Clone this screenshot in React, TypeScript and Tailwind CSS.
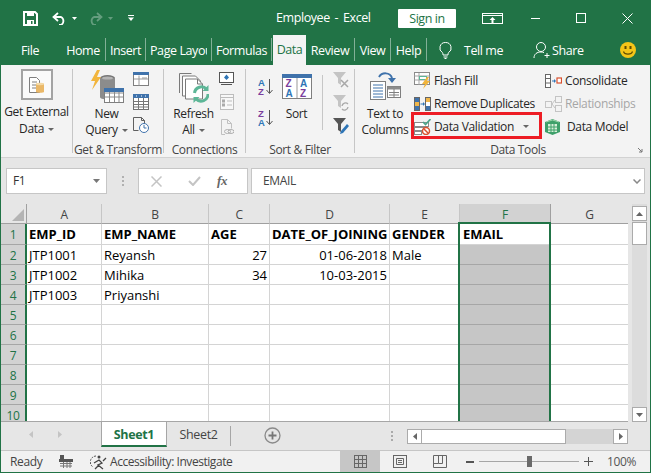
import type { ReactNode } from "react"

const ui = "font-['Open_Sans','Noto_Sans',sans-serif] tracking-[-0.35px]"
const topUi = "font-['Open_Sans','Noto_Sans',sans-serif] text-[12.5px] tracking-[-0.42px]"
const cellFont = "font-['Open_Sans','Noto_Sans',sans-serif]"

function Ico({ w, h, children, className = "" }: { w: number; h: number; children: ReactNode; className?: string }) {
  return (
    <svg width={w} height={h} viewBox={`0 0 ${w} ${h}`} fill="none" className={`block shrink-0 ${className}`}>
      {children}
    </svg>
  )
}

function Caret({ color = "#666" }: { color?: string }) {
  return (
    <svg width="6" height="3" viewBox="0 0 6 3" className="inline-block ml-[4px] align-middle">
      <path d="M0 0h6L3 3z" fill={color} />
    </svg>
  )
}

const NewQueryIcon = () => (
  <Ico w={34} h={33}>
    <ellipse cx="17.5" cy="8" rx="7.5" ry="3" fill="#777" />
    <path d="M10 8v19c0 1.5 3 2.500 7 2.500h8V8z" fill="#8c8c8c" />
    <ellipse cx="17.500" cy="8" rx="5.500" ry="1.600" fill="#b5b5b5" />
    <path d="M7 0 1 11h4L2 20 11 7H7l3-7z" fill="#f2b53c" />
    <rect x="14.500" y="18.500" width="19" height="14" fill="#fff" stroke="#7f7f7f" />
    <rect x="14" y="18" width="20" height="4" fill="#3f72ab" />
    <path d="M14.500 27h19M14.500 23h19M19.500 22v10M24.500 22v10M29 22v10" stroke="#8a8a8a" />
  </Ico>
)

const ShowQueries = () => (
  <Ico w={16} h={14}>
    <rect x=".5" y=".5" width="15" height="13" fill="#fff" stroke="#7f7f7f" />
    <rect width="16" height="3" fill="#3f72ab" />
    <path d="M6 3.500v10M1 7h14M9 6h5" stroke="#9a9a9a" />
  </Ico>
)

const FromTable = () => (
  <Ico w={16} h={16}>
    <rect x=".5" y=".5" width="15" height="15" fill="#fff" stroke="#6f6f6f" />
    <rect width="16" height="4" fill="#3f72ab" />
    <path d="M1 7.500h14M1 10.500h14M1 13h14M5.500 4v12M10.500 4v12" stroke="#777" />
    <path d="M3 2h1M8 2h1M12 2h1" stroke="#fff" />
  </Ico>
)

const RecentSources = () => (
  <Ico w={16} h={16}>
    <path d="M.5.500h8l3 3V8M.5.500v13h5" stroke="#5f5f5f" />
    <path d="M8.500.500v3h3" stroke="#5f5f5f" />
    <circle cx="11" cy="11" r="4.500" fill="#fff" stroke="#3f72ab" />
    <path d="M11 8v3h2.500" stroke="#3f72ab" />
  </Ico>
)

const RefreshIcon = () => (
  <Ico w={31} h={31}>
    <path d="M1.500 21V1.500h12" stroke="#7a7a7a" />
    <path d="M4.500 24V4h13l5 5v15z" fill="#fff" stroke="#7a7a7a" />
    <path d="M7.500 27V7h12l5 5v15z" fill="#fff" stroke="#7a7a7a" />
    <path d="M19.500 7v5h5" stroke="#7a7a7a" />
    <path d="M16.500 21a7 7 0 0 1 12-4" stroke="#5db697" strokeWidth="3" />
    <path d="M30 22a7 7 0 0 1-12 5" stroke="#5db697" strokeWidth="3" />
    <path d="M30.500 13v6h-6zM15.500 31v-6h6z" fill="#5db697" />
  </Ico>
)

const ConnectionIcon = () => (
  <Ico w={15} h={13}>
    <rect x=".5" y=".5" width="14" height="10" fill="#fff" stroke="#555" />
    <path d="M2 12.500h11" stroke="#555" />
    <path d="M7.500 2.500 10 5.500 7.500 8 5 5.500z" fill="#2e75b6" />
  </Ico>
)

const PropertiesIcon = () => (
  <Ico w={14} h={16}>
    <rect x=".5" y=".5" width="13" height="15" fill="#f8f8f8" stroke="#bdbdbd" />
    <path d="M.5 3.500h13M7 7h5M7 11h5" stroke="#bdbdbd" />
    <rect x="2.500" y="6" width="2" height="2" stroke="#aaa" />
    <rect x="2.500" y="10" width="2" height="2" stroke="#aaa" />
  </Ico>
)

const EditLinksIcon = () => (
  <Ico w={13} h={16}>
    <path d="M.5 15.500V.500h6l4 4v5M.5 15.500H4M6.500.500v4h4" stroke="#c0c0c0" />
    <ellipse cx="6.500" cy="12.500" rx="3" ry="2" stroke="#b0b0b0" />
    <ellipse cx="10" cy="12.500" rx="3" ry="2" stroke="#b0b0b0" />
  </Ico>
)

function AzIcon({ top, bottom, topColor, bottomColor }: { top: string; bottom: string; topColor: string; bottomColor: string }) {
  return (
    <Ico w={15} h={17}>
      <text x="0" y="8" fontSize="9.500" fontWeight="700" fontFamily="Liberation Sans, sans-serif" fill={topColor}>{top}</text>
      <text x="0" y="16.500" fontSize="9.500" fontWeight="700" fontFamily="Liberation Sans, sans-serif" fill={bottomColor}>{bottom}</text>
      <path d="M11.500 1v14M8.500 12l3 3.500 3-3.500" stroke="#555" />
    </Ico>
  )
}

const SortBox = () => (
  <Ico w={30} h={25}>
    <rect x=".5" y=".5" width="29" height="24" fill="#fff" stroke="#7f7f7f" />
    <rect width="30" height="4" fill="#3f72ab" />
    <path d="M15 4v20" stroke="#999" />
    <text x="3.500" y="13" fontSize="10" fontWeight="700" fontFamily="Liberation Sans, sans-serif" fill="#7a3e9d">Z</text>
    <text x="3.500" y="23" fontSize="10" fontWeight="700" fontFamily="Liberation Sans, sans-serif" fill="#2e75b6">A</text>
    <text x="18" y="13" fontSize="10" fontWeight="700" fontFamily="Liberation Sans, sans-serif" fill="#2e75b6">A</text>
    <text x="18" y="23" fontSize="10" fontWeight="700" fontFamily="Liberation Sans, sans-serif" fill="#7a3e9d">Z</text>
  </Ico>
)

const ClearFilter = () => (
  <Ico w={17} h={16}>
    <path d="M0 0h13L8 6v7L5 11V6z" fill="#c4c4c4" />
    <path d="m8 8 7 7M15 8l-7 7" stroke="#a8a8a8" strokeWidth="1.500" />
  </Ico>
)

const ReapplyFilter = () => (
  <Ico w={17} h={16}>
    <path d="M0 0h13L8 6v7L5 11V6z" fill="#c4c4c4" />
    <path d="M9 11a3.500 3.500 0 0 1 6-2M15 12a3.500 3.500 0 0 1-6 2" stroke="#a8a8a8" strokeWidth="1.300" />
  </Ico>
)

const AdvancedFilter = () => (
  <Ico w={17} h={17}>
    <path d="M0 0h13L8 6v8L5 12V6z" fill="#555" />
    <path d="m7 16 1-3 6-7 2 2-6 7z" fill="#2e75b6" />
  </Ico>
)

const TextToColumnsIcon = () => (
  <Ico w={31} h={28}>
    <path d="M9 5C12 0 20 0 22 6" stroke="#3f72ab" strokeWidth="2" />
    <path d="M18 6h8l-4 5z" fill="#3f72ab" />
    <rect x=".5" y="9.500" width="15" height="18" fill="#fff" stroke="#7f7f7f" />
    <path d="M3 13h10M3 16h10M3 19h10M3 22h10M3 25h10" stroke="#3f72ab" />
    <rect x="17.500" y="14.500" width="13" height="11" fill="#fff" stroke="#7f7f7f" />
    <rect x="17.500" y="14.500" width="13" height="3" fill="#8c8c8c" />
    <path d="M24 17v9M19 20.500h10M19 23h10" stroke="#7f7f7f" />
  </Ico>
)

const FlashFillIcon = () => (
  <Ico w={17} h={17}>
    <rect x=".5" y=".5" width="15" height="12" fill="#fff" stroke="#8a8a8a" />
    <path d="M.5 4h15M.5 8h15M5 1v12" stroke="#a5a5a5" />
    <rect x="5.500" y="4.500" width="7" height="3" fill="#fff" stroke="#5db697" />
    <path d="M13 5 8 12h3l-2 5 7-8h-3l2-4z" fill="#f2b53c" />
  </Ico>
)

const RemoveDupIcon = () => (
  <Ico w={17} h={14}>
    <rect x=".5" y=".5" width="5" height="13" fill="#fff" stroke="#666" />
    <rect x="1" y="1" width="4" height="4" fill="#3f72ab" />
    <rect x="1" y="5" width="4" height="4" fill="#f0b64a" />
    <rect x="1" y="9" width="4" height="4" fill="#3f72ab" />
    <rect x="11.500" y=".5" width="5" height="13" fill="#fff" stroke="#666" />
    <rect x="12" y="1" width="4" height="4" fill="#f0b64a" />
    <rect x="12" y="9" width="4" height="4" fill="#3f72ab" />
    <path d="M6.500 7h3" stroke="#2e75b6" />
    <path d="m9 5 2 2-2 2z" fill="#2e75b6" />
  </Ico>
)

const DataValidationIcon = () => (
  <Ico w={17} h={16}>
    <rect x=".5" y="3.500" width="14" height="4" fill="#fff" stroke="#8a8a8a" />
    <rect x=".5" y="8.500" width="9" height="3" fill="#fff" stroke="#8a8a8a" />
    <rect x=".5" y="12.500" width="7" height="3" fill="#fff" stroke="#8a8a8a" />
    <path d="m9 3 2.500 2.500L16.500 0" stroke="#4aa58a" strokeWidth="1.600" />
    <circle cx="12" cy="12" r="3.500" fill="#fff" stroke="#d9502e" strokeWidth="1.500" />
    <path d="m9.500 9.500 5 5" stroke="#d9502e" strokeWidth="1.500" />
  </Ico>
)

const ConsolidateIcon = () => (
  <Ico w={17} h={14}>
    <rect x=".5" y=".5" width="5" height="13" fill="#fff" stroke="#666" />
    <path d="M1 4.500h4M1 9h4" stroke="#666" />
    <path d="M7 7h3" stroke="#2e75b6" />
    <path d="m9 5 2 2-2 2z" fill="#2e75b6" />
    <rect x="12" y="4" width="4.500" height="5" fill="#fff" stroke="#d9502e" strokeWidth="1.200" />
  </Ico>
)

const RelationshipsIcon = () => (
  <Ico w={17} h={16}>
    <rect x=".5" y="5.500" width="6" height="6" fill="#f3f3f3" stroke="#c4c4c4" />
    <rect x="10.500" y=".5" width="6" height="6" fill="#f3f3f3" stroke="#c4c4c4" />
    <rect x="10.500" y="9.500" width="6" height="6" fill="#f3f3f3" stroke="#c4c4c4" />
    <path d="M7 8 10 4M7 8l3 4" stroke="#c4c4c4" />
  </Ico>
)

const DataModelIcon = () => (
  <Ico w={15} h={16}>
    <path d="M7.500 0 15 3v10l-7.500 3L0 13V3z" fill="#3ea06a" />
    <path d="M3 5h9v8H3z" fill="#d8efd9" />
    <path d="M6 5v8M9 5v8M3 8h9M3 11h9" stroke="#3ea06a" />
    <path d="M1 3 7.500 1 14 3" stroke="#9ed6ab" />
  </Ico>
)

function BigBtn({ w, icon, lines, caret, pt = 5 }: { w: number; icon: ReactNode; lines: string[]; caret?: boolean; pt?: number }) {
  return (
    <div className="flex flex-col items-center shrink-0" style={{ width: w }}>
      <div className="h-[41px] flex justify-center" style={{ paddingTop: pt }}>{icon}</div>
      {lines.map((l, i) => (
        <div key={l} className="h-[16px] leading-[16px] whitespace-nowrap text-[#262626]">
          {l}
          {caret && i === lines.length - 1 && <Caret />}
        </div>
      ))}
    </div>
  )
}

function Group({ w, label, children, labelClass = "text-center" }: { w: number; label: string; children: ReactNode; labelClass?: string }) {
  return (
    <div className="flex flex-col shrink-0 relative" style={{ width: w }}>
      <div className="h-[77px] flex">{children}</div>
      <div className={`h-[15px] leading-[15px] text-[#444] whitespace-nowrap ${labelClass}`}>{label}</div>
    </div>
  )
}

const GroupSep = () => <div className="w-px h-[84px] mt-[4px] bg-[#c6c6c6] shrink-0" />

function ToolRow({ icon, label, muted, gap = 3 }: { icon: ReactNode; label: string; muted?: boolean; gap?: number }) {
  return (
    <div className={`h-[23px] flex items-center whitespace-nowrap ${muted ? "text-[#a6a6a6]" : "text-[#262626]"}`} style={{ gap }}>
      {icon}
      <span>{label}</span>
    </div>
  )
}

function Ribbon() {
  return (
    <div className={`h-[93px] shrink-0 flex bg-[#f3f3f3] border-b border-[#d2d2d2] text-[12px] ${ui}`}>
      <Group w={71} label="">
        <div className="w-full flex flex-col items-center pt-[4px]">
          <div className="w-[32px] h-[31px] border-2 border-[#a3a3a3] bg-[#fafafa] flex items-center justify-center">
            <Ico w={15} h={16}>
              <path d="M.5.500h7l3 3V15.500H.5z" fill="#fff" stroke="#7f7f7f" />
              <path d="M3 5h5M3 8h4M3 11h4" stroke="#7f7f7f" />
              <path d="M7 7c0-1 8-1 8 0v8c0 1-8 1-8 0z" fill="#eab868" />
              <ellipse cx="11" cy="7" rx="4" ry="1.200" fill="#f4d9a5" />
            </Ico>
          </div>
          <div className="mt-[3px] h-[17px] leading-[17px] whitespace-nowrap text-[#262626]">Get External</div>
          <div className="h-[17px] leading-[17px] text-[#262626]">Data<Caret /></div>
        </div>
      </Group>
      <GroupSep />
      <Group w={90} label="Get & Transform">
        <div className="w-[12px] shrink-0" />
        <BigBtn w={43} icon={<NewQueryIcon />} lines={["New", "Query"]} caret />
        <div className="ml-[5px] flex flex-col pt-[7px] gap-[8px]">
          <ShowQueries />
          <FromTable />
          <div className="mt-[-1px]"><RecentSources /></div>
        </div>
      </Group>
      <GroupSep />
      <Group w={81} label="Connections">
        <div className="w-[8px] shrink-0" />
        <BigBtn w={43} icon={<RefreshIcon />} lines={["Refresh", "All"]} caret pt={7} />
        <div className="ml-[4px] flex flex-col pt-[7px] gap-[9px] items-end w-[15px]">
          <ConnectionIcon />
          <PropertiesIcon />
          <EditLinksIcon />
        </div>
      </Group>
      <GroupSep />
      <Group w={108} label="Sort & Filter">
        <div className="ml-[12px] pt-[13px] flex flex-col gap-[14px]">
          <AzIcon top="A" bottom="Z" topColor="#2e75b6" bottomColor="#7a3e9d" />
          <AzIcon top="Z" bottom="A" topColor="#7a3e9d" bottomColor="#2e75b6" />
        </div>
        <div className="ml-[5px]">
          <BigBtn w={37} icon={<SortBox />} lines={["Sort"]} pt={9} />
        </div>
        <div className="ml-[7px] mt-[10px] w-px h-[55px] bg-[#c6c6c6]" />
        <div className="ml-[10px] pt-[7px] flex flex-col gap-[7px]">
          <ClearFilter />
          <ReapplyFilter />
          <AdvancedFilter />
        </div>
      </Group>
      <GroupSep />
      <Group w={295} label="Data Tools" labelClass="text-center pl-[31px]">
        <div className="ml-[6px]">
          <BigBtn w={48} icon={<TextToColumnsIcon />} lines={["Text to", "Columns"]} pt={7} />
        </div>
        <div className="ml-[5px] w-[131px] pt-[4px] shrink-0">
          <ToolRow icon={<FlashFillIcon />} label="Flash Fill" />
          <ToolRow icon={<RemoveDupIcon />} label="Remove Duplicates" />
          <div className="relative">
            <ToolRow icon={<DataValidationIcon />} label="Data Validation" />
            <div className="absolute left-[-3px] top-[-3px] w-[131px] h-[27px] border-[3px] border-[#ed1c24]" />
            <svg width="6" height="3" viewBox="0 0 6 3" className="absolute left-[109px] top-[10px]"><path d="M0 0h6L3 3z" fill="#666" /></svg>
          </div>
        </div>
        <div className="pt-[4px] shrink-0">
          <ToolRow icon={<ConsolidateIcon />} label="Consolidate" />
          <ToolRow icon={<RelationshipsIcon />} label="Relationships" muted />
          <ToolRow icon={<DataModelIcon />} label="Data Model" gap={7} />
        </div>
      </Group>
      <svg width="5" height="5" viewBox="0 0 5 5" className="absolute left-[637px] top-[148px]">
        <path d="M0 0 4 4M4 1v3H1" stroke="#777" fill="none" />
      </svg>
    </div>
  )
}

const TabSep = () => <div className="w-px h-[23px] mb-[4px] bg-[#ffffff70] shrink-0" />

function Tab({ w, label, ml = 0 }: { w: number; label: string; ml?: number }) {
  return (
    <div className="text-center h-[29px] leading-[29px] whitespace-nowrap shrink-0" style={{ width: w, marginLeft: ml }}>
      {label}
    </div>
  )
}

function TitleBar() {
  return (
    <div className={`h-[36px] shrink-0 bg-[#217346] flex items-center text-white ${topUi}`}>
      <Ico w={15} h={15} className="ml-[22px]">
        <path d="M1 1h11l2 2v11H1z" stroke="#fff" strokeWidth="2" />
        <rect x="4" y="1" width="7" height="4" fill="#fff" />
        <rect x="4" y="9" width="7" height="5" fill="#fff" />
        <rect x="8" y="10" width="1.500" height="3" fill="#217346" />
      </Ico>
      <Ico w={15} h={13} className="ml-[14px]">
        <path d="M6 1 1.500 5 6 9" stroke="#fff" strokeWidth="1.800" />
        <path d="M2 5h7a4.500 4.500 0 0 1 0 8H7" stroke="#fff" strokeWidth="1.800" />
      </Ico>
      <svg width="5" height="3" viewBox="0 0 5 3" className="ml-[5px]"><path d="M0 0h5L2.500 3z" fill="#fff" /></svg>
      <Ico w={15} h={13} className="ml-[11px] opacity-30">
        <path d="M9 1l4.500 4L9 9" stroke="#fff" strokeWidth="1.800" />
        <path d="M13 5H6a4.500 4.500 0 0 0 0 8h2" stroke="#fff" strokeWidth="1.800" />
      </Ico>
      <svg width="5" height="3" viewBox="0 0 5 3" className="ml-[5px] opacity-30"><path d="M0 0h5L2.500 3z" fill="#fff" /></svg>
      <Ico w={6} h={6} className="ml-[15px]">
        <path d="M0 .5h6" stroke="#fff" />
        <path d="M0 2.500h6L3 6z" fill="#fff" />
      </Ico>
      <div className="ml-[142px] w-[96px] whitespace-nowrap [word-spacing:2px]">Employee - Excel</div>
      <div className="ml-[26px] w-[58px] h-[19px] bg-white text-[#217346] text-center leading-[19px] rounded-[1px]">Sign in</div>
      <Ico w={21} h={11} className="ml-[26px]">
        <rect x=".5" y=".5" width="20" height="10" stroke="#fff" />
        <path d="M1 2.500h19" stroke="#fff" />
        <path d="M10.500 4 7.500 7h2v3h2V7h2z" fill="#fff" />
      </Ico>
      <div className="ml-[28px] w-[9px] h-px bg-white" />
      <div className="ml-[36px] w-[10px] h-[10px] border border-white" />
      <Ico w={11} h={11} className="ml-[36px]">
        <path d="m.5.500 10 10M10.500.500l-10 10" stroke="#fff" />
      </Ico>
    </div>
  )
}

function TabBar() {
  return (
    <div className={`h-[29px] shrink-0 bg-[#217346] flex items-end text-white ${topUi}`}>
      <Tab w={38} ml={10} label="File" />
      <Tab w={44} ml={12} label="Home" />
      <TabSep />
      <Tab w={39} label="Insert" />
      <TabSep />
      <div className="w-[65px] h-[29px] pl-[4px] shrink-0">
        <div className="w-[57px] overflow-hidden leading-[29px] whitespace-nowrap">Page Layout</div>
      </div>
      <TabSep />
      <Tab w={59} label="Formulas" />
      <TabSep />
      <div className="ml-px w-[33px] h-[30px] bg-[#f3f3f3] text-[#217346] text-center leading-[30px] shrink-0">Data</div>
      <Tab w={48} label="Review" />
      <TabSep />
      <Tab w={35} label="View" />
      <TabSep />
      <Tab w={35} label="Help" />
      <TabSep />
      <Ico w={13} h={17} className="ml-[12px] mb-[6px]">
        <path d="M6.500.500a5.500 5.500 0 0 0-3 10.200c.6.500.5 1.800.5 2.300h5c0-.5-.1-1.800.5-2.300A5.500 5.500 0 0 0 6.500.500z" stroke="#fff" />
        <path d="M4.500 15h4M5.500 16.500h2" stroke="#fff" />
      </Ico>
      <Tab w={38} ml={12} label="Tell me" />
      <Ico w={18} h={18} className="ml-[31px] mb-[6px]">
        <circle cx="8" cy="6" r="4.500" stroke="#fff" />
        <path d="M1 17c0-4 3-6 7-6 1 0 2 .2 3 .6" stroke="#fff" />
        <path d="M14 12v5M11.500 14.500h5" stroke="#fff" />
      </Ico>
      <Tab w={30} ml={1} label="Share" />
      <Ico w={16} h={16} className="ml-[38px] mb-[7px]">
        <circle cx="8" cy="8" r="8" fill="#f5c518" />
        <rect x="4.500" y="4" width="2" height="3" fill="#5d4b00" />
        <rect x="9.500" y="4" width="2" height="3" fill="#5d4b00" />
        <path d="M3.500 9.500c1 3.500 8 3.500 9 0" stroke="#5d4b00" strokeWidth="1.200" />
      </Ico>
    </div>
  )
}

function FormulaBar() {
  return (
    <div className={`h-[46px] shrink-0 flex items-start pt-[10px] bg-[#e6e6e6] text-[12px] ${ui}`}>
      <div className="ml-[5px] w-[101px] h-[26px] bg-white border border-[#c6c6c6] flex items-center justify-between pl-[6px] pr-[6px] text-[#333] shrink-0">
        F1
        <svg width="7" height="4" viewBox="0 0 7 4"><path d="M0 0h7L3.500 4z" fill="#777" /></svg>
      </div>
      <div className="ml-[15px] mt-[8px] flex flex-col gap-[2px] shrink-0">
        <div className="w-[2px] h-[2px] bg-[#b0b0b0]" />
        <div className="w-[2px] h-[2px] bg-[#b0b0b0]" />
        <div className="w-[2px] h-[2px] bg-[#b0b0b0]" />
      </div>
      <div className="ml-[14px] w-[110px] h-[26px] bg-white border border-[#c6c6c6] flex items-center shrink-0">
        <Ico w={11} h={11} className="ml-[12px]">
          <path d="m.5.500 10 10M10.500.500l-10 10" stroke="#c4c4c4" strokeWidth="1.500" />
        </Ico>
        <Ico w={13} h={10} className="ml-[26px]">
          <path d="m1 5 4 4 7-8" stroke="#c4c4c4" strokeWidth="2" />
        </Ico>
        <span className="ml-[16px] font-['Liberation_Serif',serif] italic text-[13px] font-bold text-[#666]">fx</span>
      </div>
      <div className="ml-[3px] w-[394px] h-[26px] bg-white border border-[#c6c6c6] flex items-center justify-between pl-[11px] pr-[3px] text-[#444] shrink-0">
        EMAIL
        <svg width="8" height="5" viewBox="0 0 8 5"><path d="m.5.500 3.500 3.500L7.500.500" stroke="#888" strokeWidth="1.500" fill="none" /></svg>
      </div>
    </div>
  )
}

const columns = ["A", "B", "C", "D", "E", "F", "G"]

const rows: { a?: string; b?: string; c?: string; d?: string; e?: string; f?: string }[] = [
  { a: "EMP_ID", b: "EMP_NAME", c: "AGE", d: "DATE_OF_JOINING", e: "GENDER", f: "EMAIL" },
  { a: "JTP1001", b: "Reyansh", c: "27", d: "01-06-2018", e: "Male" },
  { a: "JTP1002", b: "Mihika", c: "34", d: "10-03-2015" },
  { a: "JTP1003", b: "Priyanshi" },
  {}, {}, {}, {}, {}, {},
]

function Cell({ children, right, bold, sel, first }: { children?: ReactNode; right?: boolean; bold?: boolean; sel?: boolean; first?: boolean }) {
  const base = "flex items-center whitespace-nowrap border-b text-black text-[13px] pt-[2px]"
  if (sel) {
    return first ? (
      <div className={`${base} bg-white border-[#d4d4d4] border-r-2 border-r-white pl-[3px] font-bold`}>{children}</div>
    ) : (
      <div className={`${base} bg-[#c6c6c6] border-[#a6a6a6] border-r-2 border-r-white`}>{children}</div>
    )
  }
  return (
    <div className={`${base} bg-white border-r border-[#d4d4d4] px-[2px] min-w-0 ${right ? "justify-end" : ""} ${bold ? "font-bold" : ""}`}>
      {children}
    </div>
  )
}

function Sheet() {
  return (
    <div className="flex h-[218px] shrink-0 bg-[#e6e6e6]">
      <div className="relative w-[627px] h-[218px] overflow-hidden border-b border-[#a6a6a6] shrink-0">
        <div className={`grid grid-cols-[26px_75px_107px_61px_120px_70px_91px_78px] grid-rows-[20px_21px_repeat(9,20px)] ${cellFont}`}>
          <div className="bg-[#e6e6e6] border-r border-b border-[#a0a0a0] relative flex items-end justify-end pr-[2px] pb-[2px]">
            <svg width="12" height="12" viewBox="0 0 12 12"><path d="M12 0v12H0z" fill="#b4b4b4" /></svg>
          </div>
          {columns.map((c) => (
            <div
              key={c}
              className={`flex items-center justify-center text-[12px] pt-[2px] border-b border-r ${ui} ${
                c === "F" ? "bg-[#d2d2d2] text-[#217346] border-[#a0a0a0]" : "bg-[#e6e6e6] text-[#444] border-b-[#a0a0a0] border-r-[#c6c6c6]"
              }`}
            >
              {c}
            </div>
          ))}
          {rows.map((r, i) => (
            <div key={i} className="contents">
              <div className={`bg-[#d2d2d2] border-b border-[#a6a6a6] border-r-2 border-r-[#217346] flex items-center justify-center pt-[2px] text-[12px] text-[#217346] ${ui}`}>
                {i + 1}
              </div>
              <Cell bold={i === 0}>{r.a}</Cell>
              <Cell bold={i === 0}>{r.b}</Cell>
              <Cell bold={i === 0} right={i > 0}>{r.c}</Cell>
              <Cell bold={i === 0} right={i > 0}>{r.d}</Cell>
              <Cell bold={i === 0}>{r.e}</Cell>
              <Cell sel first={i === 0}>{r.f}</Cell>
              <Cell />
            </div>
          ))}
        </div>
        <div className="absolute left-[457px] top-[18px] w-[93px] h-[199px] border-2 border-[#217346] border-b-0" />
      </div>
      <div className="ml-[4px] w-[15px] flex flex-col bg-[#dcdcdc] h-[218px] pt-[2px] shrink-0">
        <div className="h-[15px] bg-white border border-[#ababab] flex items-center justify-center">
          <svg width="7" height="4" viewBox="0 0 7 4"><path d="M3.500 0 7 4H0z" fill="#666" /></svg>
        </div>
        <div className="mt-px h-[23px] bg-white border border-[#ababab]" />
        <div className="flex-1" />
        <div className="h-[15px] bg-white border border-[#ababab] flex items-center justify-center">
          <svg width="7" height="4" viewBox="0 0 7 4"><path d="M0 0h7L3.500 4z" fill="#666" /></svg>
        </div>
      </div>
    </div>
  )
}

function SheetTabs() {
  return (
    <div className={`h-[28px] shrink-0 flex bg-[#e6e6e6] text-[12.5px] ${ui}`}>
      <div className="w-[100px] flex items-center shrink-0 pb-[3px]">
        <svg width="4" height="7" viewBox="0 0 4 7" className="ml-[28px]"><path d="M4 0v7L0 3.500z" fill="#c4c4c4" /></svg>
        <svg width="4" height="7" viewBox="0 0 4 7" className="ml-[25px]"><path d="M0 0v7l4-3.500z" fill="#c4c4c4" /></svg>
      </div>
      <div className="w-[66px] h-[25px] bg-white border-l border-r border-[#a6a6a6] border-b-2 border-b-[#217346] text-center leading-[25px] font-bold text-[#217346] shrink-0">Sheet1</div>
      <div className="w-[63px] h-[25px] text-center leading-[25px] text-[#444] shrink-0">Sheet2</div>
      <div className="mt-[4px] w-px h-[20px] bg-[#a6a6a6] shrink-0" />
      <Ico w={17} h={17} className="ml-[33px] mt-[5px]">
        <circle cx="8.500" cy="8.500" r="7.500" stroke="#8a8a8a" strokeWidth="1.300" />
        <path d="M8.500 4.500v8M4.500 8.500h8" stroke="#777" strokeWidth="1.800" />
      </Ico>
      <div className="ml-[110px] mt-[9px] flex flex-col gap-[2px] shrink-0">
        <div className="w-[2px] h-[2px] bg-[#aaa]" />
        <div className="w-[2px] h-[2px] bg-[#aaa]" />
        <div className="w-[2px] h-[2px] bg-[#aaa]" />
      </div>
      <div className="ml-[14px] mt-[7px] w-[221px] h-[15px] flex bg-[#d4d4d4] shrink-0">
        <div className="w-[15px] bg-white border border-[#ababab] flex items-center justify-center">
          <svg width="4" height="7" viewBox="0 0 4 7"><path d="M4 0v7L0 3.500z" fill="#666" /></svg>
        </div>
        <div className="w-[144px] bg-white border border-[#ababab] border-l-0" />
        <div className="flex-1" />
        <div className="w-[15px] bg-white border border-[#ababab] flex items-center justify-center">
          <svg width="4" height="7" viewBox="0 0 4 7"><path d="M0 0v7l4-3.500z" fill="#666" /></svg>
        </div>
      </div>
    </div>
  )
}

function StatusBar() {
  return (
    <div className={`h-[22px] shrink-0 flex items-center bg-[#f1f1f1] border-t border-[#c6c6c6] text-[12px] text-[#444] ${ui}`}>
      <span className="ml-[9px] w-[39px]">Ready</span>
      <Ico w={14} h={13} className="ml-[10px]">
        <rect x="1" y="0" width="4" height="4" fill="#555" />
        <rect y="4" width="14" height="3" fill="#555" />
        <path d="M1 8.500h12M1 11h12M4.500 7v6M8 7v6M11 7v6" stroke="#777" />
      </Ico>
      <Ico w={17} h={16} className="ml-[17px]">
        <path d="M6 2a6 6 0 0 0-3 11" stroke="#555" strokeDasharray="2 1" />
        <circle cx="9" cy="3" r="1.500" fill="#444" />
        <path d="m4 9 5-3 3 3-4 2 5 4M13 7l3-3M5 15l4-4" stroke="#444" strokeWidth="1.300" />
      </Ico>
      <span className="ml-[3px] w-[124px] whitespace-nowrap tracking-[-0.45px]">Accessibility: Investigate</span>
      <div className="ml-[106px] w-[40px] h-[21px] bg-[#c6c6c6] flex items-center justify-center shrink-0">
        <Ico w={13} h={13}>
          <rect x=".5" y=".5" width="12" height="12" stroke="#666" />
          <path d="M4.500 1v11M8.500 1v11M1 4.500h11M1 8.500h11" stroke="#666" />
        </Ico>
      </div>
      <Ico w={14} h={13} className="ml-[13px]">
        <rect x=".5" y=".5" width="13" height="12" stroke="#666" />
        <path d="M3.500 3.500h7v6h-7zM5 5.500h4M5 7.500h4" stroke="#666" />
      </Ico>
      <Ico w={14} h={13} className="ml-[26px]">
        <path d="M.5 12.500V.500h13v12zM.5 8.500h5V.500M5.500 8.500h4V.500" stroke="#666" />
      </Ico>
      <div className="ml-[19px] w-[8px] h-[2px] bg-[#555]" />
      <div className="ml-[5px] w-[100px] h-px bg-[#a6a6a6] relative shrink-0">
        <div className="absolute left-[48px] top-[-5px] w-[5px] h-[11px] bg-[#6a6a6a]" />
      </div>
      <Ico w={9} h={9} className="ml-[5px]">
        <path d="M4.500 0v9M0 4.500h9" stroke="#555" />
      </Ico>
      <span className="ml-[14px] text-[#555]">100%</span>
    </div>
  )
}

export default function App() {
  return (
    <div className="relative w-[651px] h-[473px] flex flex-col overflow-hidden bg-[#e6e6e6] border-x border-b border-[#217346]">
      <TitleBar />
      <TabBar />
      <Ribbon />
      <FormulaBar />
      <Sheet />
      <SheetTabs />
      <StatusBar />
    </div>
  )
}
